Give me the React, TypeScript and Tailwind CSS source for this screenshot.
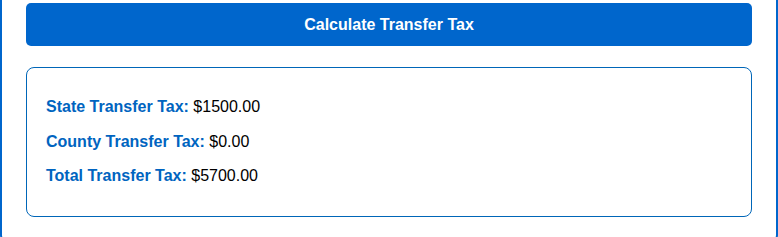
const results = [
  { label: 'State Transfer Tax:', value: '$1500.00' },
  { label: 'County Transfer Tax:', value: '$0.00' },
  { label: 'Total Transfer Tax:', value: '$5700.00' },
]

export default function App() {
  return (
    <div className="h-[237px] overflow-hidden bg-white font-['Liberation_Sans',Arial,sans-serif]">
      {/* calculator card, scrolled so its top is out of view */}
      <div className="-mt-[23px] rounded-lg border-2 border-[#0066cc] px-6 pt-6 pb-[24px]">
        <button className="flex h-[43px] w-full items-center justify-center rounded-[5px] bg-[#0066cc] text-base font-bold text-white">
          Calculate Transfer Tax
        </button>

        {/* results */}
        <div className="mt-[21px] flex flex-col gap-[10.5px] rounded-lg border border-[#0066b8] pt-[27px] pb-[28px] pl-[19px]">
          {results.map((r) => (
            <p key={r.label} className="text-base leading-6 text-black">
              <span className="font-bold text-[#0064c0]">{r.label}</span> {r.value}
            </p>
          ))}
        </div>
      </div>
    </div>
  )
}
